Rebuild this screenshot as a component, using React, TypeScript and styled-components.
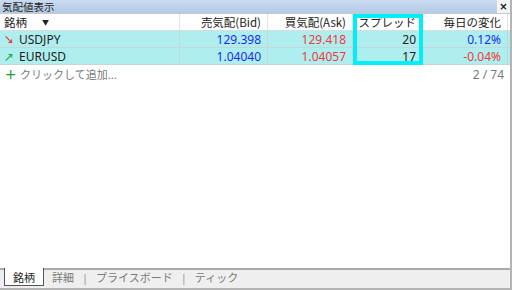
import { Fragment } from "react";
import styled, { createGlobalStyle } from "styled-components";

const GlobalStyle = createGlobalStyle`
  html, body {
    margin: 0;
    padding: 0;
    background: #ffffff;
  }
  body {
    font-family: "Noto Sans", "Noto Sans CJK JP", sans-serif;
  }
`;

const Window = styled.div`
  width: 512px;
  height: 290px;
  box-sizing: border-box;
  display: flex;
  flex-direction: column;
  border-right: 2px solid #b4b4b4;
  border-bottom: 2px solid #b4b4b4;
  background: #ffffff;
  overflow: hidden;
`;

const TitleBar = styled.div`
  height: 13px;
  display: flex;
  align-items: stretch;
  flex-shrink: 0;
`;

const TitleText = styled.div`
  flex: 1;
  background: linear-gradient(#c9dbef, #b3cbe7);
  font-family: "Noto Sans CJK JP", sans-serif;
  font-size: 10.5px;
  line-height: 13px;
  color: #222;
  padding-left: 2px;
  overflow: hidden;
`;

const CloseButton = styled.div`
  width: 13px;
  background: #f4f4f4;
  font-family: "DejaVu Sans", sans-serif;
  font-size: 10px;
  font-weight: bold;
  line-height: 13px;
  text-align: center;
  color: #111;
`;

const TableArea = styled.div`
  position: relative;
  flex: 1;
  border-top: 1px solid #c8c8c8;
`;

const Row = styled.div<{ $kind: "head" | "item" }>`
  display: grid;
  grid-template-columns: 180px 88px 85px 70px 85px;
  height: 16px;
  background: ${(p) => (p.$kind === "head" ? "#ffffff" : "#afeeee")};
  border-bottom: 1px solid ${(p) => (p.$kind === "head" ? "#dcdcdc" : "#c6d6d6")};
`;

const Cell = styled.div<{ $align?: "left" | "right"; $color?: string; $head?: boolean }>`
  display: flex;
  align-items: center;
  justify-content: ${(p) => (p.$align === "right" ? "flex-end" : "flex-start")};
  gap: 5px;
  padding: 0 6px 0 4px;
  border-right: 1px solid ${(p) => (p.$head ? "#e2e2e2" : "#c6d6d6")};
  font-family: ${(p) =>
    p.$head ? `"Noto Sans CJK JP", sans-serif` : `"Noto Sans", "Noto Sans CJK JP", sans-serif`};
  font-size: ${(p) => (p.$head ? "11.5px" : "12px")};
  color: ${(p) => p.$color || "#222"};
  white-space: nowrap;
  overflow: hidden;
`;

const SortArrow = styled.span`
  margin-left: 10px;
  font-size: 7px;
  color: #222;
`;

const Trend = styled.span<{ $up: boolean }>`
  width: 10px;
  font-size: 10px;
  font-weight: bold;
  color: ${(p) => (p.$up ? "#1aa84a" : "#e83030")};
  text-align: center;
`;

const AddRow = styled.div`
  display: flex;
  align-items: center;
  height: 16px;
  padding: 1px 6px 0 4px;
  font-family: "Noto Sans CJK JP", sans-serif;
  font-size: 11px;
  color: #7a7a7a;
`;

const Plus = styled.span`
  width: 13px;
  font-family: "DejaVu Sans", sans-serif;
  font-size: 14px;
  color: #1a9e2a;
  margin-right: 3px;
  text-align: center;
`;

const Count = styled.span`
  margin-left: auto;
  font-family: "Noto Sans", sans-serif;
  font-size: 12px;
  color: #7a7a7a;
`;

const ColumnHighlight = styled.div`
  position: absolute;
  left: 353px;
  top: 0;
  width: 70px;
  height: 51px;
  box-sizing: border-box;
  border: 4px solid #00eef8;
  pointer-events: none;
`;

const TabBar = styled.div`
  height: 18px;
  flex-shrink: 0;
  display: flex;
  align-items: flex-start;
  padding-left: 4px;
  background: #efefef;
  border-top: 2px solid #a8a8a8;
`;

const Tab = styled.div<{ $active?: boolean }>`
  height: 17px;
  display: flex;
  align-items: center;
  padding: 0 8px;
  margin-top: -2px;
  font-family: "Noto Sans CJK JP", sans-serif;
  font-size: 11px;
  color: ${(p) => (p.$active ? "#222" : "#7a7a7a")};
  background: ${(p) => (p.$active ? "#ffffff" : "transparent")};
  border: ${(p) => (p.$active ? "1px solid #555" : "none")};
  border-top: none;
`;

const Sep = styled.span`
  font-family: "Noto Sans", sans-serif;
  font-size: 11px;
  color: #9a9a9a;
  line-height: 15px;
`;

const quotes = [
  { symbol: "USDJPY", up: false, bid: "129.398", ask: "129.418", spread: "20", change: "0.12%", pos: true },
  { symbol: "EURUSD", up: true, bid: "1.04040", ask: "1.04057", spread: "17", change: "-0.04%", pos: false },
];

const tabs = ["銘柄", "詳細", "プライスボード", "ティック"];

export default function App() {
  return (
    <>
      <GlobalStyle />
      <Window>
        <TitleBar>
          <TitleText>気配値表示</TitleText>
          <CloseButton>×</CloseButton>
        </TitleBar>
        <TableArea>
          <Row $kind="head">
            <Cell $head>
              銘柄<SortArrow>▼</SortArrow>
            </Cell>
            <Cell $head $align="right">売気配(Bid)</Cell>
            <Cell $head $align="right">買気配(Ask)</Cell>
            <Cell $head $align="right">スプレッド</Cell>
            <Cell $head $align="right">毎日の変化</Cell>
          </Row>
          {quotes.map((q) => (
            <Row $kind="item" key={q.symbol}>
              <Cell>
                <Trend $up={q.up}>{q.up ? "↗" : "↘"}</Trend>
                {q.symbol}
              </Cell>
              <Cell $align="right" $color="#1a2cf0">{q.bid}</Cell>
              <Cell $align="right" $color="#f03a3a">{q.ask}</Cell>
              <Cell $align="right">{q.spread}</Cell>
              <Cell $align="right" $color={q.pos ? "#1a2cf0" : "#f03a3a"}>{q.change}</Cell>
            </Row>
          ))}
          <AddRow>
            <Plus>+</Plus>
            クリックして追加...
            <Count>2 / 74</Count>
          </AddRow>
          <ColumnHighlight />
        </TableArea>
        <TabBar>
          {tabs.map((t, i) => (
            <Fragment key={t}>
              {i > 1 && <Sep>|</Sep>}
              <Tab $active={i === 0}>{t}</Tab>
            </Fragment>
          ))}
        </TabBar>
      </Window>
    </>
  );
}
